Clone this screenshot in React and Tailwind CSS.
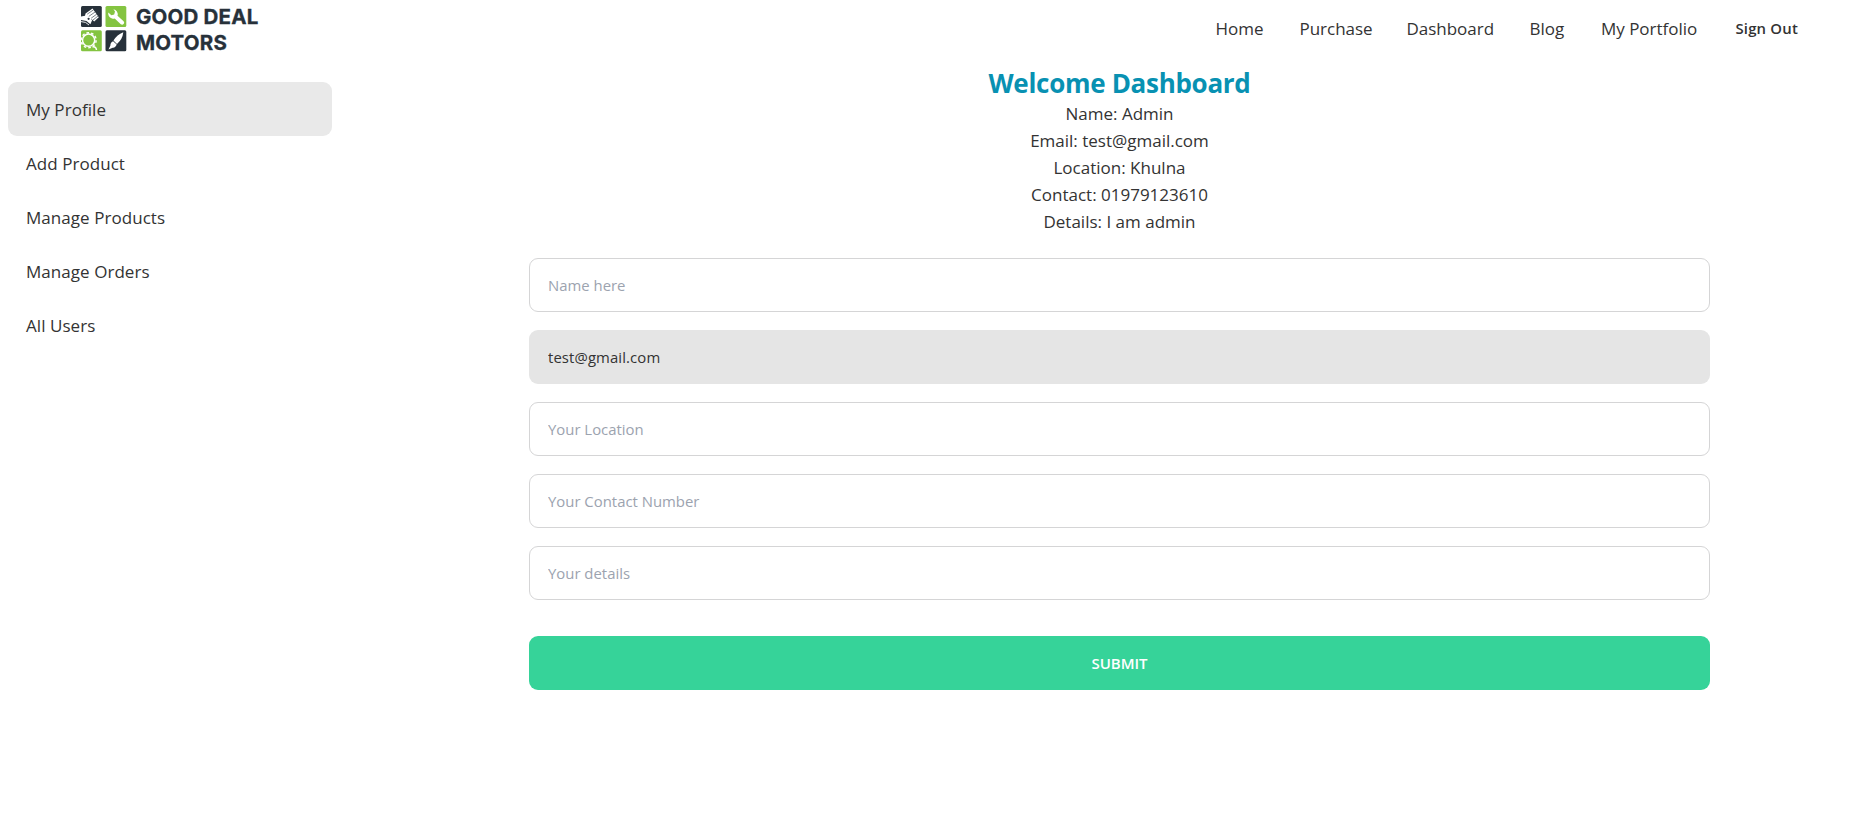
import React from "react";

const navItems = [
  { label: "Home", width: "w-[84px]" },
  { label: "Purchase", width: "w-[107px]" },
  { label: "Dashboard", width: "w-[123px]" },
  { label: "Blog", width: "w-[71.5px]" },
  { label: "My Portfolio", width: "w-[134.5px]" },
];

const sideItems = ["My Profile", "Add Product", "Manage Products", "Manage Orders", "All Users"];

const details = [
  "Name: Admin",
  "Email: test@gmail.com",
  "Location: Khulna",
  "Contact: 01979123610",
  "Details: I am admin",
];

function LogoMark() {
  return (
    <svg width="46" height="46" viewBox="0 0 46 46" aria-hidden="true">
      <rect x="0" y="0" width="20.8" height="21" rx="1.5" fill="#27313a" />
      <rect x="24.5" y="0" width="20.8" height="21" rx="1.5" fill="#84c441" />
      <rect x="0" y="24.3" width="20.8" height="21" rx="1.5" fill="#84c441" />
      <rect x="24.5" y="24.3" width="20.8" height="21" rx="1.5" fill="#27313a" />
      <g>
        <path d="M4.5 7.5 11.5 2.5 17.8 11.3 13.2 15.5 10.5 13 7.5 13 4 10Z" fill="#fff" />
        <path d="M6.2 8.2 12.6 3.8M7.8 10.4 14.2 5.9M10.2 12.2 15.8 8.1M12 14 17 10" stroke="#27313a" strokeWidth="0.6" />
        <path d="M0 10.5 5.5 9.5 11.2 14 9.4 18.2 5.5 15 0 14Z" fill="#fff" />
        <circle cx="7.6" cy="12.8" r="1.1" fill="#27313a" />
        <path d="M0 15.6 4.5 16.4 8 19" stroke="#fff" strokeWidth="0.9" fill="none" />
      </g>
      <path
        d="M32.4 3.2a5.2 5.2 0 0 1 4.1 6.6l6.1 5.4a2.1 2.1 0 0 1-2.8 3.1l-6.1-5.7a5.2 5.2 0 0 1-6.4-6.1l3.1 2.7 2.8-.8.8-2.8Z"
        fill="#fff"
      />
      <g fill="none" stroke="#fff">
        <circle cx="7.6" cy="34.2" r="6.1" strokeWidth="1.5" />
        <circle cx="7.6" cy="34.2" r="7.5" strokeWidth="1.5" strokeDasharray="2.6 2.11" />
        <path d="M11.5 41q3.6-.9 4 3" strokeWidth="1.5" />
      </g>
      <path d="M42.3 26.3q-6.4 2.5-9.8 8.3l3.5 3.3q5.5-4.4 6.3-11.6Z" fill="#fff" />
      <path d="M32.1 35.2q-2.9 1.4-2.7 4.2l-1.9 4 4.2-1.7q2.9.2 4-3.1Z" fill="#fff" />
    </svg>
  );
}

function Field({ placeholder }) {
  return (
    <input
      type="text"
      placeholder={placeholder}
      className="h-[54px] w-full rounded-[9px] border border-[#d5d5d6] bg-white px-[18px] text-[14.9px] text-[#333] placeholder:text-[#9ca3af] placeholder:opacity-100"
    />
  );
}

export default function App() {
  return (
    <div className="flex min-h-screen flex-col bg-white font-['Open_Sans','Noto_Sans',sans-serif] text-[17px] leading-[27px] text-[#333]">
      <header className="flex h-[58px] items-start justify-between pl-[81px] pr-[54px]">
        <a href="#" className="flex items-start gap-[9px] pt-[6px]">
          <LogoMark />
          <span className="-mt-[2px] flex flex-col font-['Inter',sans-serif] text-[20.5px] font-bold leading-[25.5px] tracking-[0.18px] text-[#27313a] [-webkit-text-stroke:0.3px_#27313a]">
            <span>GOOD DEAL</span>
            <span>MOTORS</span>
          </span>
        </a>
        <nav className="flex h-[56px] items-center">
          {navItems.map((item) => (
            <a key={item.label} href="#" className={`whitespace-nowrap ${item.width}`}>
              {item.label}
            </a>
          ))}
          <button className="whitespace-nowrap text-[14.9px] font-semibold tracking-[0.2px]">Sign Out</button>
        </nav>
      </header>
      <div className="flex flex-1">
        <aside className="w-[340px] px-2 pt-6">
          <ul className="flex flex-col">
            {sideItems.map((label, i) => (
              <li
                key={label}
                className={
                  i === 0
                    ? "flex h-[54px] items-center rounded-[9px] bg-[#e9e9e9] px-[18px] tracking-[0.05px]"
                    : "flex h-[54px] items-center px-[18px] tracking-[0.05px]"
                }
              >
                {label}
              </li>
            ))}
          </ul>
        </aside>
        <main className="flex flex-1 flex-col items-center pl-[47px] pt-[7px]">
          <section className="flex w-[1181px] flex-col items-center">
            <h1 className="text-[26px] font-bold leading-[36px] tracking-[-0.3px] text-[#0891b2]">
              Welcome Dashboard
            </h1>
            <div className="-mt-px text-center">
              {details.map((line) => (
                <p key={line}>{line}</p>
              ))}
            </div>
          </section>
          <form className="mt-[23px] flex w-[1181px] flex-col gap-[18px]">
            <Field placeholder="Name here" />
            <input
              type="email"
              readOnly
              value="test@gmail.com"
              className="h-[54px] w-full rounded-[9px] bg-[#e5e5e5] px-[19px] text-[14.9px] tracking-[0.1px] text-[#333]"
            />
            <Field placeholder="Your Location" />
            <Field placeholder="Your Contact Number" />
            <Field placeholder="Your details" />
            <button
              type="button"
              className="mt-[18px] h-[54px] w-full rounded-[9px] bg-[#36d399] text-[15px] font-semibold text-white"
            >
              SUBMIT
            </button>
          </form>
        </main>
      </div>
    </div>
  );
}
